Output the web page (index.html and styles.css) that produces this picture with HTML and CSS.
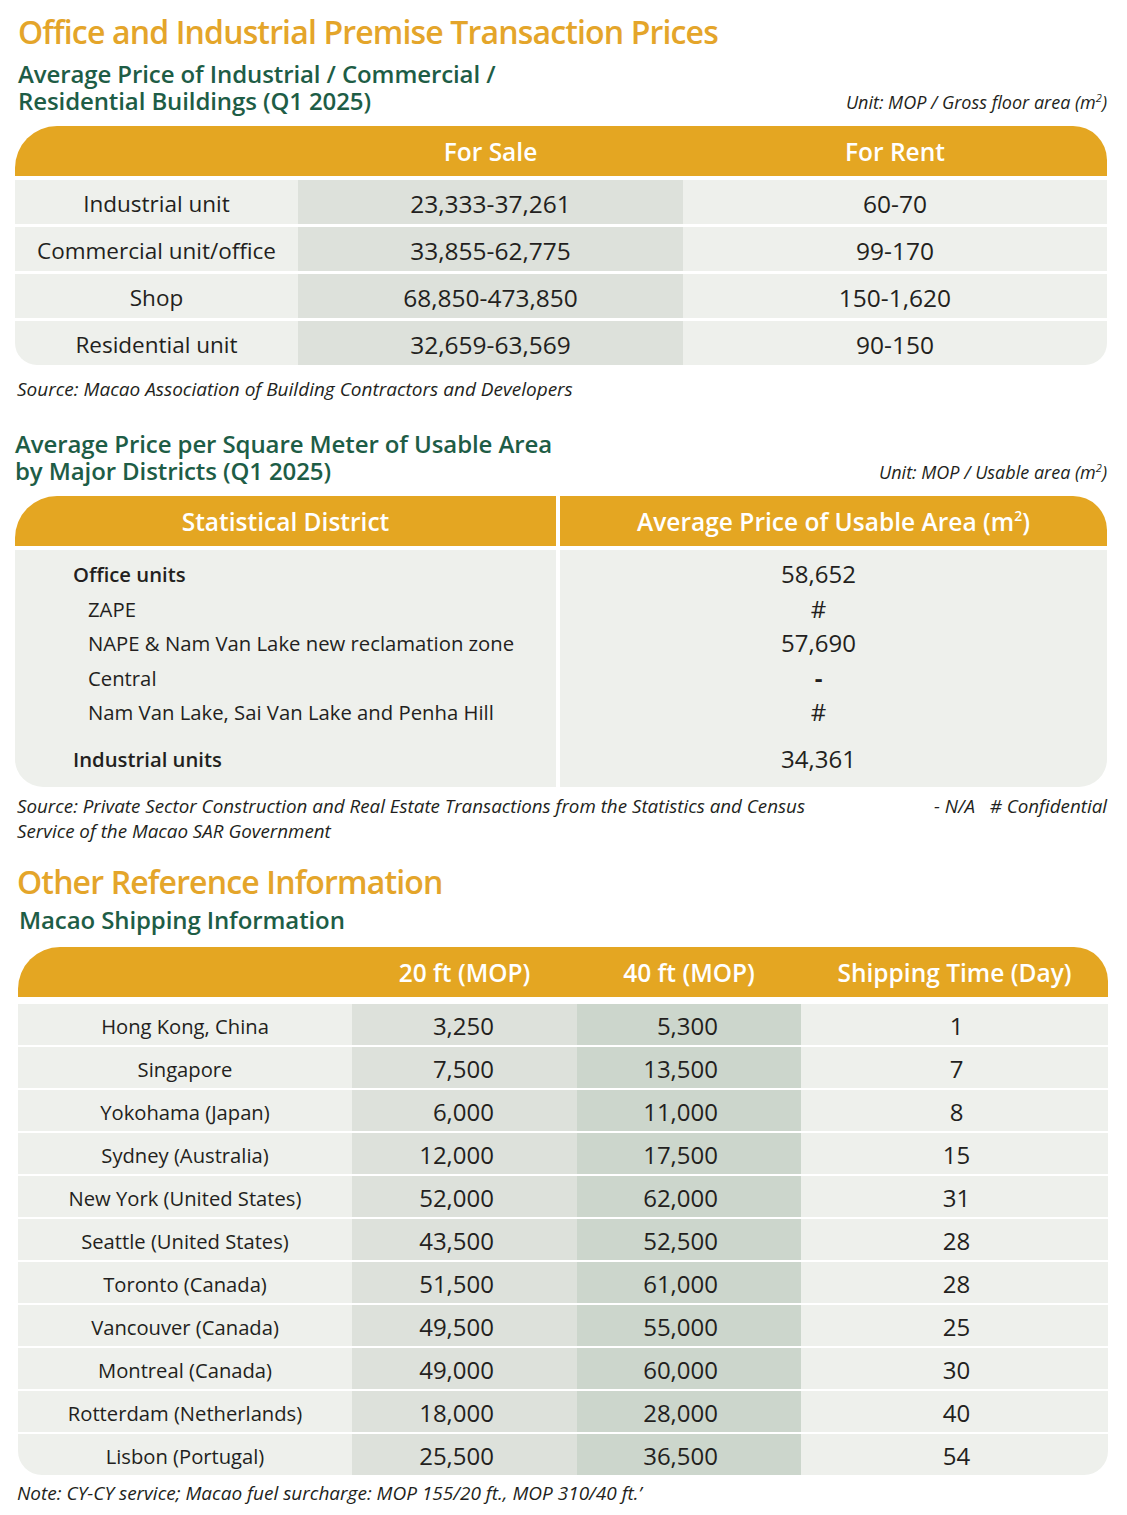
FILE: index.html
```html
<!DOCTYPE html>
<html lang="en">
<head>
<meta charset="utf-8">
<title>Office and Industrial Premise Transaction Prices</title>
<link rel="stylesheet" href="styles.css">
</head>
<body>
<div class="page">
  <h1 class="title">Office and Industrial Premise Transaction Prices</h1>

  <div class="subhead s1">
    <h2>Average Price of Industrial / Commercial /<br>Residential Buildings (Q1 2025)</h2>
    <span class="unit">Unit: MOP / Gross floor area (m<sup>2</sup>)</span>
  </div>

  <div class="t1">
    <div class="hd"><span></span><span>For Sale</span><span>For Rent</span></div>
    <div class="row"><span class="c">Industrial unit</span><span class="c g">23,333-37,261</span><span class="c n">60-70</span></div>
    <div class="row"><span class="c">Commercial unit/office</span><span class="c g">33,855-62,775</span><span class="c n">99-170</span></div>
    <div class="row"><span class="c">Shop</span><span class="c g">68,850-473,850</span><span class="c n">150-1,620</span></div>
    <div class="row last"><span class="c">Residential unit</span><span class="c g">32,659-63,569</span><span class="c n">90-150</span></div>
  </div>
  <p class="note n1">Source: Macao Association of Building Contractors and Developers</p>

  <div class="subhead s2">
    <h2>Average Price per Square Meter of Usable Area<br>by Major Districts (Q1 2025)</h2>
    <span class="unit">Unit: MOP / Usable area (m<sup>2</sup>)</span>
  </div>

  <div class="t2">
    <div class="h h-l"><span>Statistical District</span></div>
    <div class="h h-r"><span>Average Price of Usable Area (m<sup>2</sup>)</span></div>

    <div class="l first b">Office units</div><div class="r first">58,652</div>
    <div class="l sub">ZAPE</div><div class="r">#</div>
    <div class="l sub">NAPE &amp; Nam Van Lake new reclamation zone</div><div class="r">57,690</div>
    <div class="l sub">Central</div><div class="r dash">-</div>
    <div class="l sub">Nam Van Lake, Sai Van Lake and Penha Hill</div><div class="r">#</div>
    <div class="l end b">Industrial units</div><div class="r end">34,361</div>
  </div>
  <div class="note n2">
    <p>Source: Private Sector Construction and Real Estate Transactions from the Statistics and Census<br>Service of the Macao SAR Government</p>
    <p class="legend">- N/A&nbsp;&nbsp;&nbsp;# Confidential</p>
  </div>

  <h1 class="title t-other">Other Reference Information</h1>
  <h2 class="ship-h">Macao Shipping Information</h2>

  <div class="t3">
    <div class="hd"><span></span><span>20 ft (MOP)</span><span>40 ft (MOP)</span><span>Shipping Time (Day)</span></div>
    <div class="row"><span>Hong Kong, China</span><span class="g">3,250</span><span class="gg">5,300</span><span>1</span></div>
    <div class="row"><span>Singapore</span><span class="g">7,500</span><span class="gg">13,500</span><span>7</span></div>
    <div class="row"><span>Yokohama (Japan)</span><span class="g">6,000</span><span class="gg">11,000</span><span>8</span></div>
    <div class="row"><span>Sydney (Australia)</span><span class="g">12,000</span><span class="gg">17,500</span><span>15</span></div>
    <div class="row"><span>New York (United States)</span><span class="g">52,000</span><span class="gg">62,000</span><span>31</span></div>
    <div class="row"><span>Seattle (United States)</span><span class="g">43,500</span><span class="gg">52,500</span><span>28</span></div>
    <div class="row"><span>Toronto (Canada)</span><span class="g">51,500</span><span class="gg">61,000</span><span>28</span></div>
    <div class="row"><span>Vancouver (Canada)</span><span class="g">49,500</span><span class="gg">55,000</span><span>25</span></div>
    <div class="row"><span>Montreal (Canada)</span><span class="g">49,000</span><span class="gg">60,000</span><span>30</span></div>
    <div class="row"><span>Rotterdam (Netherlands)</span><span class="g">18,000</span><span class="gg">28,000</span><span>40</span></div>
    <div class="row last"><span>Lisbon (Portugal)</span><span class="g">25,500</span><span class="gg">36,500</span><span>54</span></div>
  </div>
  <p class="note n3">Note: CY-CY service; Macao fuel surcharge: MOP 155/20 ft., MOP 310/40 ft.’</p>
</div>
</body>
</html>
```

FILE: styles.css
```css
* { box-sizing: border-box; margin: 0; padding: 0; }

body {
  font-family: "Open Sans", "Noto Sans", sans-serif;
  color: #231f20;
  background: #fff;
}

.page {
  width: 1127px;
  padding: 12px 20px 0 15px;
}

.title {
  color: #e4a52a;
  font-weight: 600;
  font-size: 32px;
  line-height: 40px;
  letter-spacing: -0.85px;
  margin-left: 3px;
}

.subhead {
  display: flex;
  justify-content: space-between;
  align-items: flex-end;
  margin-left: 3px;
}
.subhead h2 {
  color: #1e5d46;
  font-weight: 600;
  font-size: 24px;
  line-height: 27px;
  letter-spacing: -0.1px;
}
.subhead .unit {
  font-style: italic;
  font-size: 18px;
  letter-spacing: 0;
  line-height: 24px;
}
.unit sup { font-size: 11px; vertical-align: 7px; line-height: 0; }

.s1 { margin-top: 8px; }
.s2 { margin-top: 30px; margin-left: 0; }

/* table 1 */
.t1 { margin-top: 12px; display: flex; flex-direction: column; gap: 3px; }
.t1 .hd, .t1 .row {
  display: grid;
  grid-template-columns: 283px 385px 1fr;
}
.t1 .hd {
  height: 50px;
  background: #e4a622;
  border-radius: 42px 34px 0 0;
  color: #fff;
  font-weight: 600;
  font-size: 24.5px;
  align-items: center;
  text-align: center;
  margin-bottom: 1px;
}
.t1 .row { height: 44px; }
.t1 .c {
  background: #eef0ec;
  display: flex;
  align-items: center;
  justify-content: center;
  font-size: 22.5px;
  padding-top: 2px;
}
.t1 .c.g, .t1 .c.n { font-size: 24.5px; }
.t1 .c.g { background: #dde1db; }
.t1 .row.last .c:first-child { border-bottom-left-radius: 22px; }
.t1 .row.last .c:last-child { border-bottom-right-radius: 22px; }

.note {
  font-style: italic;
  font-size: 19px;
  letter-spacing: 0;
  line-height: 22px;
}
.n1 { margin-top: 13px; margin-left: 2px; }

/* table 2 */
.t2 {
  margin-top: 12px;
  display: grid;
  grid-template-columns: 541px 1fr;
  column-gap: 4px;
}
.t2 .h {
  height: 50px;
  background: #e4a622;
  color: #fff;
  font-weight: 600;
  font-size: 24.5px;
  display: flex;
  align-items: center;
  justify-content: center;
  margin-bottom: 4px;
}
.t2 .h sup { font-size: 14px; vertical-align: 10px; line-height: 0; }
.t2 .h-l { border-top-left-radius: 42px; }
.t2 .h-r { border-top-right-radius: 34px; }
.t2 .l, .t2 .r {
  background: #eef0ec;
  font-size: 20.3px;
  line-height: 34.5px;
}
.t2 .l { padding-left: 58px; }
.t2 .l.sub { padding-left: 73px; }
.t2 .l.b { font-weight: 600; }
.t2 .r { text-align: center; padding-right: 30px; font-size: 24px; }
.t2 .r.dash { font-weight: 700; }
.t2 .first { padding-top: 7px; }
.t2 .end { padding-top: 12px; padding-bottom: 11px; }
.t2 .l.end { border-bottom-left-radius: 28px; }
.t2 .r.end { border-bottom-right-radius: 28px; }

.n2 {
  margin-top: 7px;
  margin-left: 2px;
  display: flex;
  justify-content: space-between;
  line-height: 25px;
  font-size: 18.8px;
}

.t-other { margin-top: 18px; margin-left: 2px; }
.ship-h {
  color: #1e5d46;
  font-weight: 600;
  font-size: 24px;
  line-height: 27px;
  letter-spacing: -0.1px;
  margin-top: 4px;
  margin-left: 4px;
}

/* table 3 */
.t3 {
  margin-top: 14px;
  margin-left: 3px;
  margin-right: -1px;
  display: flex;
  flex-direction: column;
  gap: 2px;
}
.t3 .hd, .t3 .row {
  display: grid;
  grid-template-columns: 334px 225px 224px 1fr;
  text-align: center;
}
.t3 .hd {
  height: 50px;
  background: #e4a622;
  border-radius: 42px 34px 0 0;
  color: #fff;
  font-weight: 600;
  font-size: 24.5px;
  align-items: center;
  margin-bottom: 5px;
}
.t3 .row { height: 41px; }
.t3 .row span {
  background: #eef0ec;
  display: flex;
  align-items: center;
  justify-content: center;
  font-size: 20.2px;
  padding-top: 2px;
}
.t3 .row span.g, .t3 .row span.gg {
  font-size: 24px;
  justify-content: flex-end;
  padding-right: 83px;
}
.t3 .row span:last-child { font-size: 24px; padding-left: 4px; }
.t3 .row span.g { background: #dde1db; }
.t3 .row span.gg { background: #ccd6cc; }
.t3 .row.last span:first-child { border-bottom-left-radius: 24px; }
.t3 .row.last span:last-child { border-bottom-right-radius: 24px; }

.n3 { margin-top: 7px; margin-left: 2px; }
```
